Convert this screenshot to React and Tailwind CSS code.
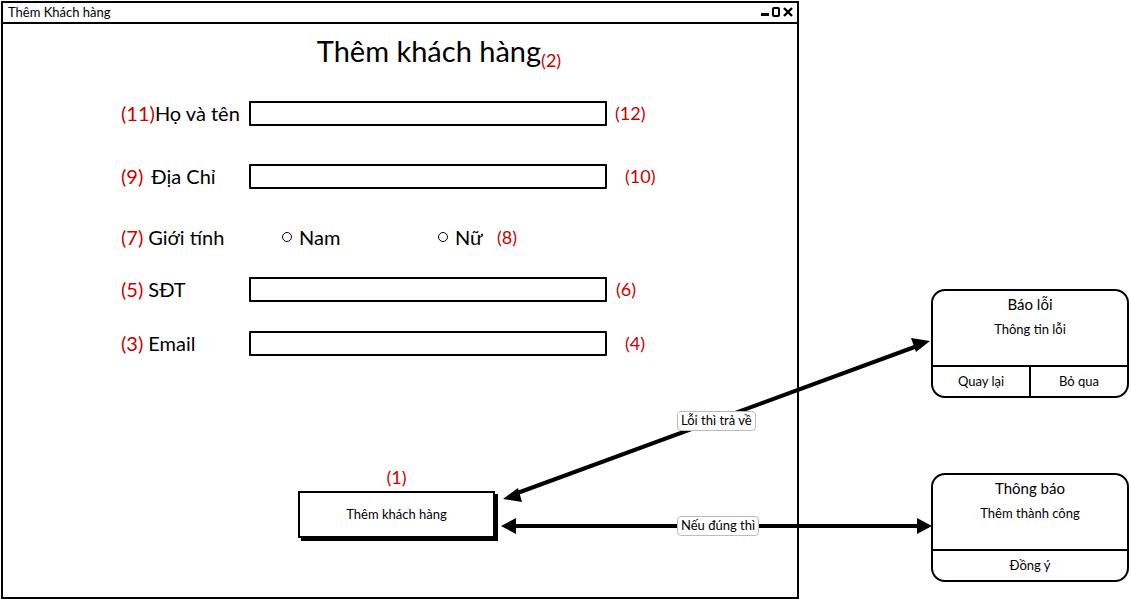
import React from "react";

const font = { fontFamily: '"Lato", "Noto Sans", sans-serif' };

const Field = ({ num, label, note, noteClass, top }) => (
  <div className={`flex items-center h-[26px] ${top}`}>
    <div className="w-[128px] flex items-center text-[20px] text-black whitespace-nowrap">
      <span className="text-[#cc0000]">{num}</span>
      {label}
    </div>
    <div className="w-[358px] h-[25px] border-2 border-black bg-white rounded-[1px]" />
    <span className={`text-[18px] text-[#cc0000] ${noteClass}`}>{note}</span>
  </div>
);

const Dialog = ({ title, body, children, className }) => (
  <div className={`w-[198px] h-[109px] border-2 border-black rounded-[14px] bg-white flex flex-col overflow-hidden ${className}`}>
    <div className="flex-1 flex flex-col items-center">
      <div className="mt-[2px] text-[15px] leading-[22px]">{title}</div>
      <div className="mt-[4px] text-[13px] leading-[20px]">{body}</div>
    </div>
    <div className="h-[31px] border-t-2 border-black flex text-[13px]">{children}</div>
  </div>
);

export default function App() {
  return (
    <div className="relative w-[1131px] h-[600px] bg-white text-black overflow-hidden" style={font}>
      <div className="flex">
        {/* main window */}
        <div className="ml-[1px] mt-[1px] w-[798px] h-[598px] border-2 border-black flex flex-col">
          <div className="h-[21px] border-b-2 border-black flex items-center justify-between pl-[5px] pr-[4px]">
            <span className="text-[13px]">Thêm Khách hàng</span>
            <div className="flex items-end gap-[3px] pb-[2px]">
              <div className="w-[8px] h-[3px] bg-black mb-[1px]" />
              <div className="w-[8px] h-[10px] border-2 border-black rounded-[2px]" />
              <svg width="10" height="10" viewBox="0 0 10 10">
                <path d="M1 1L9 9M9 1L1 9" stroke="black" strokeWidth="2.4" />
              </svg>
            </div>
          </div>

          <div className="flex justify-center items-end mt-[10px] pl-[78px]">
            <span className="text-[29px] leading-[34px]">Thêm khách hàng</span>
            <span className="text-[18px] text-[#cc0000] mb-[-6px]">(2)</span>
          </div>

          <div className="pl-[118px]">
            <Field num="(11)" label="Họ và tên" note="(12)" noteClass="ml-[8px]" top="mt-[32px]" />
            <Field num="(9)" label={<span className="ml-[8px]">Địa Chỉ</span>} note="(10)" noteClass="ml-[18px]" top="mt-[37px]" />
            <div className="flex items-center h-[26px] mt-[35px] text-[20px]">
              <div className="w-[161px] flex items-center">
                <span className="text-[#cc0000]">(7)</span>
                <span className="ml-[5px]">Giới tính</span>
              </div>
              <span className="w-[10px] h-[10px] rounded-full border-[1.5px] border-black" />
              <span className="ml-[7px] w-[139px]">Nam</span>
              <span className="w-[10px] h-[10px] rounded-full border-[1.5px] border-black" />
              <span className="ml-[7px] w-[42px]">Nữ</span>
              <span className="text-[18px] text-[#cc0000]">(8)</span>
            </div>
            <Field num="(5)" label={<span className="ml-[5px]">SĐT</span>} note="(6)" noteClass="ml-[9px]" top="mt-[26px]" />
            <Field num="(3)" label={<span className="ml-[5px]">Email</span>} note="(4)" noteClass="ml-[18px]" top="mt-[28px]" />
          </div>

          <div className="flex flex-col items-center ml-[295px] w-[197px] mt-[111px]">
            <span className="text-[18px] text-[#cc0000] leading-[20px]">(1)</span>
            <div className="mt-[4px] w-[197px] h-[47px] border-2 border-black bg-white shadow-[3px_3px_0_0_#000] flex items-center justify-center text-[13px]">
              Thêm khách hàng
            </div>
          </div>
        </div>

        {/* dialogs */}
        <div className="flex flex-col ml-[132px]">
          <Dialog title="Báo lỗi" body="Thông tin lỗi" className="mt-[289px]">
            <div className="w-[98px] border-r-2 border-black flex items-center justify-center">Quay lại</div>
            <div className="flex-1 flex items-center justify-center">Bỏ qua</div>
          </Dialog>
          <Dialog title="Thông báo" body="Thêm thành công" className="mt-[75px]">
            <div className="flex-1 flex items-center justify-center">Đồng ý</div>
          </Dialog>
        </div>
      </div>

      {/* connectors */}
      <svg className="absolute inset-0 pointer-events-none" width="1131" height="600">
        <line x1="512" y1="495" x2="920" y2="345" stroke="black" strokeWidth="4" />
        <polygon points="503,499 518,488 522,502" fill="black" />
        <polygon points="930,341 911,338 916,352" fill="black" />
        <line x1="512" y1="526" x2="920" y2="526" stroke="black" strokeWidth="4" />
        <polygon points="501,526 516,518 516,534" fill="black" />
        <polygon points="932,526 917,518 917,534" fill="black" />
      </svg>
      <div className="absolute left-[677px] top-[411px] px-[3px] h-[20px] flex items-center bg-white border border-[#bbbbbb] rounded-[4px] text-[13px]">
        Lỗi thì trả về
      </div>
      <div className="absolute left-[677px] top-[516px] px-[3px] h-[20px] flex items-center bg-white border border-[#bbbbbb] rounded-[4px] text-[13px]">
        Nếu đúng thì
      </div>
    </div>
  );
}
